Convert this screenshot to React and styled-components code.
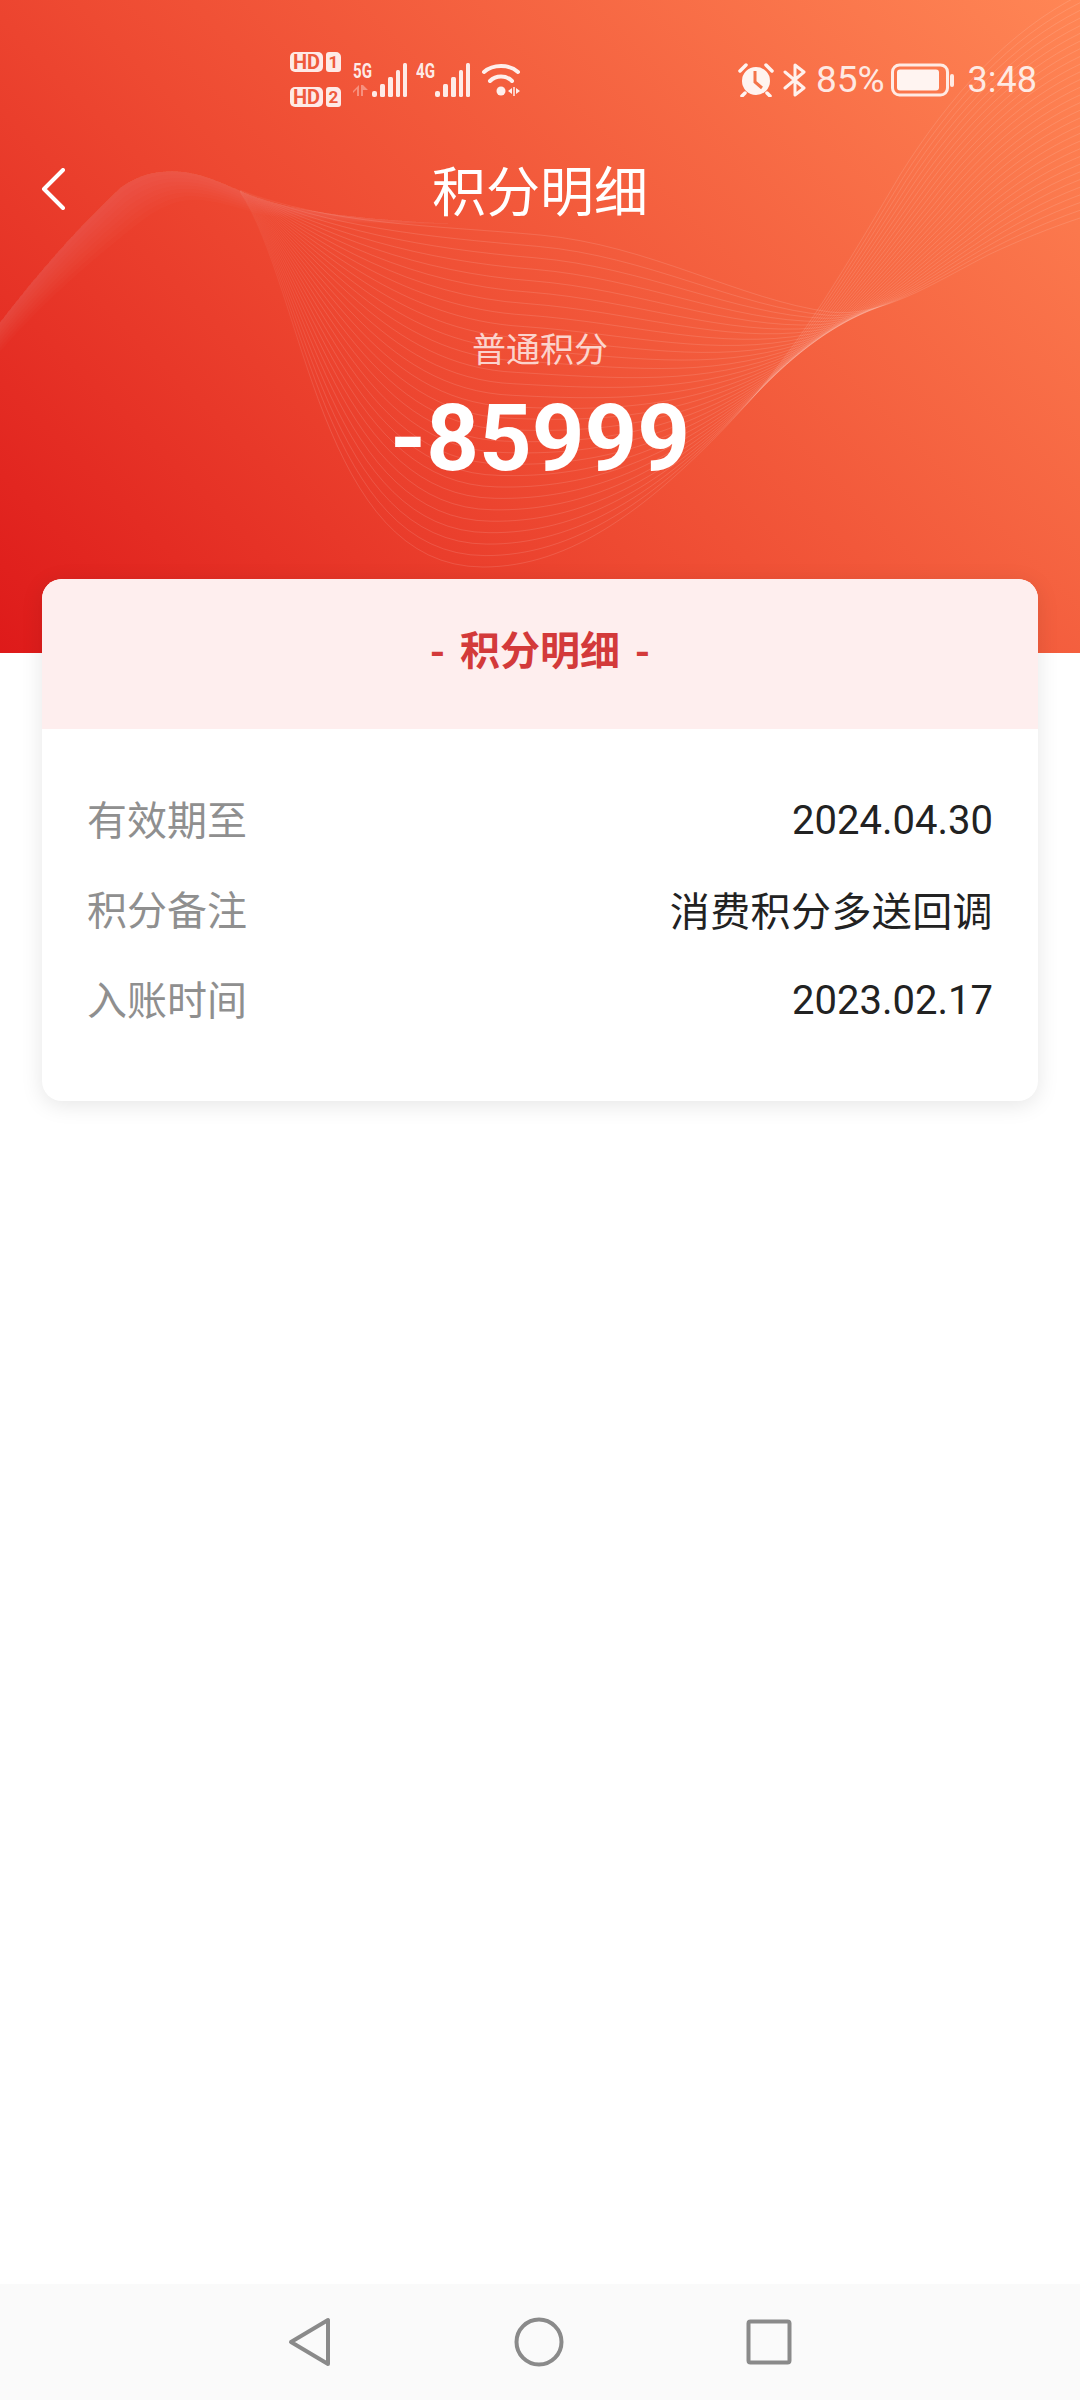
import React from 'react'
import styled, { createGlobalStyle } from 'styled-components'

const GlobalStyle = createGlobalStyle`
    html, body {
        margin: 0;
        padding: 0;
        background: #fff;
        font-family: Roboto, "Noto Sans CJK SC", sans-serif;
    }
`

const CJK = '"Noto Sans CJK SC", Roboto, sans-serif'

const details = [
    { label: '有效期至', value: '2024.04.30' },
    { label: '积分备注', value: '消费积分多送回调', cjk: true },
    { label: '入账时间', value: '2023.02.17' },
]

// ribbon lines are blended between these two cubic chains, they cross near x=850
const UPPER_EDGE = [
    [240, 190],
    [330, 225], [430, 225], [540, 235],
    [650, 245], [740, 300], [830, 312],
    [880, 318], [930, 285], [988, 255],
    [1020, 240], [1050, 228], [1080, 218],
]
const LOWER_EDGE = [
    [240, 192],
    [305, 290], [320, 567], [483, 567],
    [570, 567], [650, 510], [747, 404],
    [800, 345], [850, 260], [900, 175],
    [950, 95], [1010, 30], [1080, -5],
]

// the soft band on the left, stacked fills so it is brightest at its outer edge
const BAND_OUTER = [
    [0, 322],
    [40, 270], [80, 225], [121, 187],
    [140, 174], [155, 171], [172, 171],
    [205, 171], [230, 188], [259, 198],
    [300, 212], [370, 220], [448, 223],
]
const BAND_INNER = [
    [0, 352],
    [40, 305], [90, 262], [135, 226],
    [160, 206], [180, 198], [200, 200],
    [222, 202], [238, 208], [255, 213],
    [300, 222], [370, 225], [448, 224],
]

const blend = (from, to, t) => from.map((p, i) => [
    (p[0] + (to[i][0] - p[0]) * t).toFixed(1),
    (p[1] + (to[i][1] - p[1]) * t).toFixed(1),
])

const chain = (pts) => {
    let d = `M${pts[0].join(' ')}`
    for (let i = 1; i < pts.length; i += 3) {
        d += ` C${pts.slice(i, i + 3).map(p => p.join(' ')).join(' ')}`
    }
    return d
}

const bandFill = (t) => {
    const inner = blend(BAND_OUTER, BAND_INNER, t).reverse()
    const back = chain(inner).replace('M', 'L')
    return `${chain(BAND_OUTER)} ${back} Z`
}

const ribbon = Array.from({ length: 30 }, (_, i) => chain(blend(UPPER_EDGE, LOWER_EDGE, i / 29)))
const band = Array.from({ length: 8 }, (_, i) => bandFill((i + 1) / 8))

const Wave = () => (
    <WaveSvg viewBox="0 0 1080 653">
        <defs>
            <linearGradient id="ribbonStroke" gradientUnits="userSpaceOnUse" x1="240" y1="0" x2="1080" y2="0">
                <stop offset="0" stopColor="#fff" stopOpacity="0.01" />
                <stop offset="0.1" stopColor="#fff" stopOpacity="0.12" />
                <stop offset="1" stopColor="#fff" stopOpacity="0.12" />
            </linearGradient>
        </defs>
        {band.map((d, i) => (
            <path key={i} d={d} fill="#fff" fillOpacity="0.017" />
        ))}
        {ribbon.map((d, i) => (
            <path key={i} d={d} fill="none" stroke="url(#ribbonStroke)" strokeWidth="1" />
        ))}
    </WaveSvg>
)

const Signal = () => (
    <svg width="35" height="34" viewBox="0 0 35 34" fill="#fff" fillOpacity="0.88">
        <rect x="0" y="28" width="5" height="6" rx="2" />
        <rect x="8" y="21" width="5" height="13" rx="1.500" />
        <rect x="16" y="14" width="5" height="20" rx="1.500" />
        <rect x="24" y="7" width="4" height="27" rx="1.500" />
        <rect x="31" y="0" width="4" height="34" rx="1.500" />
    </svg>
)

const DataArrows = () => (
    <ArrowsSvg width="15" height="11" viewBox="0 0 15 11" fill="#fff" fillOpacity="0.35">
        <path d="M6 0v11H4V4L0 8V6zM8 0h2l5 5-5 0v6H8z" />
    </ArrowsSvg>
)

const Wifi = () => (
    <WifiSvg width="42" height="34" viewBox="0 0 42 34" fill="none" stroke="#fff" strokeOpacity="0.9" strokeLinecap="round">
        <path d="M3 9C12 1 28 1 37 9" strokeWidth="4" />
        <path d="M9 18C15 12 25 12 31 18" strokeWidth="4" />
        <circle cx="20" cy="28" r="4.500" fill="#fff" stroke="none" fillOpacity="0.9" />
        <path d="M31 25v6l-4-3zM35 25l4 3-4 3z" fill="#fff" stroke="none" fillOpacity="0.9" />
        <path d="M33 24v9" strokeWidth="1.500" strokeLinecap="butt" />
    </WifiSvg>
)

const Alarm = () => (
    <svg width="36" height="34" viewBox="0 0 36 34" fill="none">
        <circle cx="18" cy="18" r="14" fill="#fff" fillOpacity="0.92" />
        <path d="M17 8v11l7 6" stroke="#f4744a" strokeWidth="3" />
        <path d="M2 8L8 2M34 8L28 2M7 30l-3 3M29 30l3 3" stroke="#fff" strokeOpacity="0.92" strokeWidth="3.500" strokeLinecap="round" />
    </svg>
)

const Bluetooth = () => (
    <svg width="24" height="34" viewBox="0 0 24 34" fill="none" stroke="#fff" strokeOpacity="0.9" strokeWidth="3" strokeLinecap="round" strokeLinejoin="round">
        <path d="M2 9L21 25L12 32V2L21 9L2 25" />
    </svg>
)

const Battery = () => (
    <svg width="63" height="34" viewBox="0 0 63 34" fill="none">
        <rect x="1.500" y="2" width="55" height="30" rx="7" stroke="#fff" strokeOpacity="0.85" strokeWidth="3" />
        <rect x="6" y="6.500" width="42" height="21" rx="3" fill="#fff" fillOpacity="0.92" />
        <rect x="59" y="11" width="4" height="13" rx="2" fill="#fff" fillOpacity="0.85" />
    </svg>
)

const App = () => {
    return (
        <Container>
            <GlobalStyle />
            <Hero>
                <Wave />
                <StatusBar>
                    <Networks>
                        <SimColumn>
                            <SimRow><HdBadge>HD</HdBadge><SimCard>1</SimCard></SimRow>
                            <SimRow><HdBadge>HD</HdBadge><SimCard>2</SimCard></SimRow>
                        </SimColumn>
                        <NetworkCell>
                            <NetworkLabel>5G</NetworkLabel>
                            <DataArrows />
                        </NetworkCell>
                        <Signal />
                        <NetworkCell $gap>
                            <NetworkLabel>4G</NetworkLabel>
                        </NetworkCell>
                        <Signal />
                        <Wifi />
                    </Networks>
                    <SystemIcons>
                        <Alarm />
                        <Bluetooth />
                        <StatusText>85%</StatusText>
                        <Battery />
                        <StatusText $time>3:48</StatusText>
                    </SystemIcons>
                </StatusBar>
                <TitleBar>
                    <BackButton>
                        <svg width="24" height="42" viewBox="0 0 24 42" fill="none" stroke="#fff" strokeWidth="4" strokeLinecap="round" strokeLinejoin="round">
                            <path d="M22 2L3 21L22 40" />
                        </svg>
                    </BackButton>
                    <Title>积分明细</Title>
                </TitleBar>
                <PointsLabel>普通积分</PointsLabel>
                <PointsValue>-85999</PointsValue>
            </Hero>
            <Card>
                <CardHead>- 积分明细 -</CardHead>
                <CardBody>
                    {details.map(item => (
                        <Row key={item.label}>
                            <Label>{item.label}</Label>
                            <Value $cjk={item.cjk}>{item.value}</Value>
                        </Row>
                    ))}
                </CardBody>
            </Card>
            <Spacer />
            <NavBar>
                <svg width="44" height="50" viewBox="0 0 44 50" fill="none" stroke="#8a8a8a" strokeWidth="4" strokeLinejoin="round">
                    <path d="M40 3V47L3 25Z" />
                </svg>
                <svg width="50" height="50" viewBox="0 0 50 50" fill="none" stroke="#8a8a8a" strokeWidth="4">
                    <circle cx="25" cy="25" r="22.500" />
                </svg>
                <svg width="46" height="46" viewBox="0 0 46 46" fill="none" stroke="#8a8a8a" strokeWidth="4" strokeLinejoin="round">
                    <rect x="2.500" y="2.500" width="41" height="41" rx="2" />
                </svg>
            </NavBar>
        </Container>
    )
}

const Container = styled.div`
    width: 1080px;
    height: 2400px;
    display: flex;
    flex-direction: column;
    overflow: hidden;
    background: #fff;
`
const Hero = styled.div`
    position: relative;
    height: 653px;
    flex-shrink: 0;
    display: flex;
    flex-direction: column;
    align-items: center;
    overflow: hidden;
    color: #fff;
    background: linear-gradient(45deg, #de1a1a 0%, #ee4a32 42%, #ff8655 100%);
`
const WaveSvg = styled.svg`
    position: absolute;
    top: 0;
    left: 0;
    width: 1080px;
    height: 653px;
`
const StatusBar = styled.div`
    position: relative;
    width: 100%;
    box-sizing: border-box;
    height: 110px;
    padding: 52px 43px 0 290px;
    display: flex;
    justify-content: space-between;
    align-items: flex-start;
`
const Networks = styled.div`
    display: flex;
    align-items: flex-start;
    padding-top: 11px;
`
const SimColumn = styled.div`
    display: flex;
    flex-direction: column;
    gap: 15px;
    margin: -11px 12px 0 0;
`
const SimRow = styled.div`
    display: flex;
    gap: 3px;
`
const HdBadge = styled.span`
    width: 33px;
    height: 20px;
    border-radius: 5px;
    background: rgba(255, 255, 255, 0.88);
    color: #ee5a3c;
    font-size: 20px;
    font-weight: 700;
    line-height: 20px;
    text-align: center;
`
const SimCard = styled(HdBadge)`
    width: 15px;
    font-size: 17px;
    border-radius: 3px 5px 3px 3px;
`
const NetworkCell = styled.div`
    width: 19px;
    margin-left: ${props => props.$gap ? '9px' : '0'};
    display: flex;
    flex-direction: column;
    gap: 6px;
`
const NetworkLabel = styled.span`
    display: block;
    font-size: 21px;
    font-weight: 700;
    line-height: 16px;
    color: rgba(255, 255, 255, 0.9);
    transform: scaleX(0.72);
    transform-origin: left center;
`
const ArrowsSvg = styled.svg`
    display: block;
`
const WifiSvg = styled.svg`
    margin-left: 11px;
`
const SystemIcons = styled.div`
    display: flex;
    align-items: center;
    gap: 9px;
    margin-top: 11px;
    height: 34px;
    color: rgba(255, 255, 255, 0.85);
`
const StatusText = styled.span`
    line-height: 34px;
    margin: ${props => props.$time ? '0 0 0 5px' : '0 -3px 0 0'};
    font-size: ${props => props.$time ? '36px' : '37px'};
`
const TitleBar = styled.div`
    position: relative;
    width: 100%;
    height: 84px;
    margin-top: 40px;
    display: flex;
    align-items: center;
    justify-content: center;
`
const BackButton = styled.div`
    position: absolute;
    left: 41px;
    top: 18px;
    line-height: 0;
`
const Title = styled.div`
    font-family: ${CJK};
    font-size: 54px;
    line-height: 78px;
    padding-bottom: 6px;
`
const PointsLabel = styled.div`
    position: relative;
    margin-top: 94px;
    font-family: ${CJK};
    font-size: 34px;
    line-height: 40px;
    color: rgba(255, 255, 255, 0.75);
`
const PointsValue = styled.div`
    position: relative;
    margin-top: 21px;
    font-size: 92px;
    line-height: 100px;
    font-weight: 700;
`
const Card = styled.div`
    position: relative;
    margin: -74px 42px 0;
    height: 522px;
    flex-shrink: 0;
    border-radius: 20px;
    overflow: hidden;
    background: #fff;
    box-shadow: 0 4px 22px rgba(0, 0, 0, 0.1);
`
const CardHead = styled.div`
    height: 150px;
    box-sizing: border-box;
    padding-bottom: 12px;
    display: flex;
    align-items: center;
    justify-content: center;
    background: #feeeee;
    color: #d33a3a;
    font-family: ${CJK};
    font-size: 40px;
    font-weight: 700;
    word-spacing: 6px;
`
const CardBody = styled.div`
    padding: 46px 45px 0;
`
const Row = styled.div`
    height: 90px;
    display: flex;
    align-items: center;
    justify-content: space-between;
    font-size: 40px;
`
const Label = styled.span`
    font-family: ${CJK};
    color: #8f8f8f;
    margin-bottom: 5px;
`
const Value = styled.span`
    font-family: ${props => props.$cjk ? CJK : 'Roboto, sans-serif'};
    margin-bottom: ${props => props.$cjk ? '3px' : '0'};
    letter-spacing: ${props => props.$cjk ? '0.4px' : '0'};
    color: #222;
`
const Spacer = styled.div`
    flex: 1;
`
const NavBar = styled.div`
    height: 116px;
    flex-shrink: 0;
    box-sizing: border-box;
    padding: 0 288px;
    display: flex;
    align-items: center;
    justify-content: space-between;
    background: #fafafa;
`

export default App
